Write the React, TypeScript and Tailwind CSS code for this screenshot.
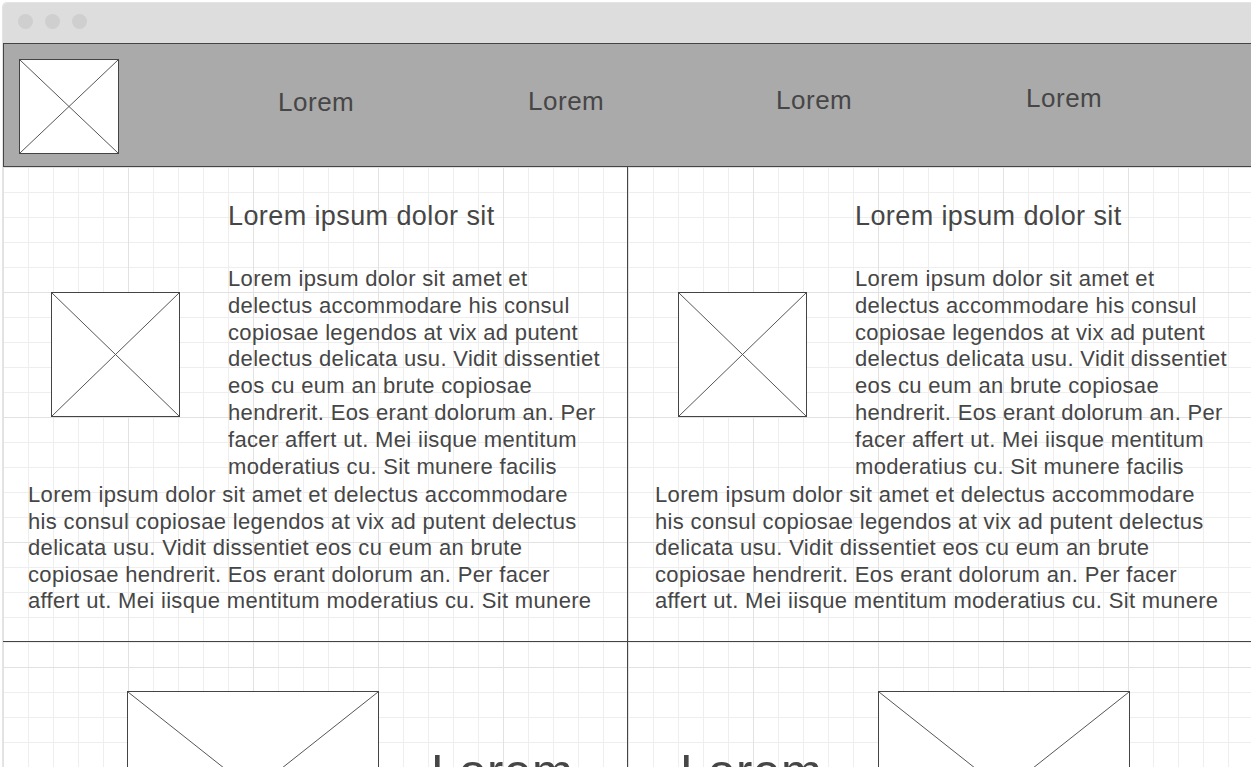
import React from 'react';

const INK = 'text-[#464646]';

// Wireframe image placeholder: bordered box crossed corner to corner
const Placeholder: React.FC<{ className?: string }> = ({ className = '' }) => (
  <div className={`border border-[#444] bg-white ${className}`}>
    <svg className="block w-full h-full" viewBox="0 0 100 100" preserveAspectRatio="none">
      <line x1="0" y1="0" x2="100" y2="100" stroke="#555" strokeWidth={1} vectorEffect="non-scaling-stroke" />
      <line x1="100" y1="0" x2="0" y2="100" stroke="#555" strokeWidth={1} vectorEffect="non-scaling-stroke" />
    </svg>
  </div>
);

const sideText =
  'Lorem ipsum dolor sit amet et delectus accommodare his consul copiosae legendos at vix ad putent delectus delicata usu. Vidit dissentiet eos cu eum an brute copiosae hendrerit. Eos erant dolorum an. Per facer affert ut. Mei iisque mentitum moderatius cu. Sit munere facilis';

const fullText =
  'Lorem ipsum dolor sit amet et delectus accommodare his consul copiosae legendos at vix ad putent delectus delicata usu. Vidit dissentiet eos cu eum an brute copiosae hendrerit. Eos erant dolorum an. Per facer affert ut. Mei iisque mentitum moderatius cu. Sit munere';

const ArticleCell: React.FC<{ className?: string }> = ({ className = '' }) => (
  <div className={`h-[475px] border-b border-[#444] ${className}`}>
    <h2 className={`ml-[200px] mt-[33px] text-[27px] leading-[32px] tracking-[0.015em] ${INK}`}>
      Lorem ipsum dolor sit
    </h2>
    <div className="flex mt-[34px]">
      <div className="w-[200px] shrink-0 pt-[26px]">
        <Placeholder className="ml-[23px] w-[129px] h-[125px]" />
      </div>
      <p className={`w-[380px] shrink-0 text-[22px] leading-[26.8px] tracking-[0.015em] ${INK}`}>{sideText}</p>
    </div>
    <p className={`w-[568px] mt-[2px] text-[22px] leading-[26.5px] tracking-[0.015em] ${INK}`}>{fullText}</p>
  </div>
);

const navItems = [
  { w: 'w-[250px]', mt: 'mt-[43px]' },
  { w: 'w-[248px]', mt: 'mt-[42px]' },
  { w: 'w-[250px]', mt: 'mt-[41px]' },
  { w: 'w-[200px]', mt: 'mt-[39px]' },
];

export default function App() {
  return (
    <div className="h-screen overflow-hidden bg-white pl-[2px] pt-[2px] font-['Liberation_Sans',Arial,sans-serif]">
      <div className="h-full rounded-tl-[5px] border-l border-t border-[#e4e4e4] overflow-hidden">
        {/* Window chrome */}
        <div className="h-[40px] bg-[#dddddd] flex items-start gap-[12px] pl-[15px] pt-[11px]">
          <span className="w-[15px] h-[15px] rounded-full bg-[#cfcfcf]" />
          <span className="w-[15px] h-[15px] rounded-full bg-[#cfcfcf]" />
          <span className="w-[15px] h-[15px] rounded-full bg-[#cfcfcf]" />
        </div>

        {/* Header */}
        <div className="h-[124px] border-y border-l border-[#444] bg-[#aaaaaa] flex items-start">
          <Placeholder className="ml-[15px] mt-[15px] w-[100px] h-[95px] shrink-0" />
          <nav className="flex items-start ml-[159px]">
            {navItems.map((n, i) => (
              <span key={i} className={`${n.w} ${n.mt} shrink-0 text-[26px] leading-[30px] tracking-[0.02em] ${INK}`}>
                Lorem
              </span>
            ))}
          </nav>
        </div>

        {/* Gridded page body */}
        <div className="h-full bg-[linear-gradient(to_right,#e2e2e2_1px,transparent_1px),linear-gradient(to_bottom,#e2e2e2_1px,transparent_1px),linear-gradient(to_right,#eeeeee_1px,transparent_1px),linear-gradient(to_bottom,#eeeeee_1px,transparent_1px)] bg-[size:125px_125px,125px_125px,25px_25px,25px_25px]">
          <div className="grid grid-cols-[625px_1fr]">
            <ArticleCell className="border-r pl-[25px]" />
            <ArticleCell className="pl-[27px]" />

            <div className="h-[300px] border-r border-[#444] flex items-start pl-[124px] pt-[49px]">
              <Placeholder className="w-[252px] h-[200px] shrink-0" />
              <span className={`ml-[52px] mt-[52px] text-[49px] leading-[56px] tracking-[0.015em] ${INK}`}>Lorem</span>
            </div>
            <div className="h-[300px] flex items-start pl-[52px] pt-[49px]">
              <span className={`w-[198px] shrink-0 mt-[52px] text-[49px] leading-[56px] tracking-[0.015em] ${INK}`}>Lorem</span>
              <Placeholder className="w-[252px] h-[200px] shrink-0" />
            </div>
          </div>
        </div>
      </div>
    </div>
  );
}
